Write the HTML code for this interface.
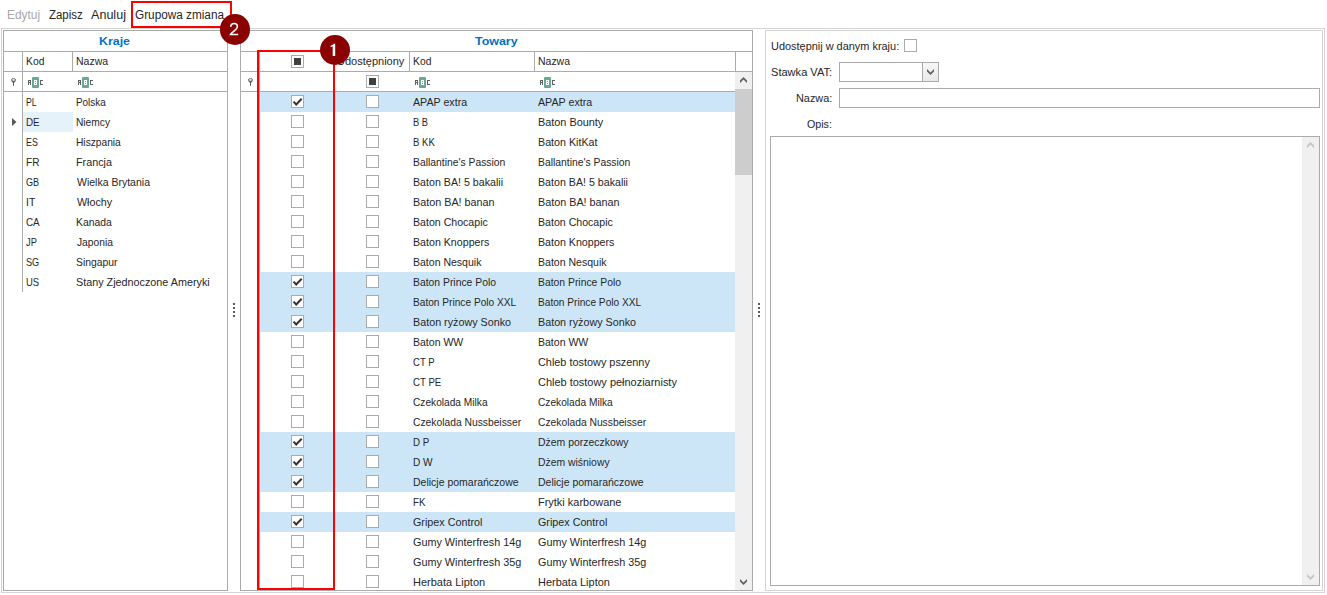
<!DOCTYPE html>
<html><head><meta charset="utf-8"><title>Towary</title>
<style>
html,body{margin:0;padding:0;background:#fff}
body{width:1327px;height:595px;position:relative;overflow:hidden;font-family:"Liberation Sans",sans-serif;font-size:11px;color:#262626}
.a{position:absolute}
.t{position:absolute;white-space:pre;line-height:20px;height:20px;transform-origin:0 0}
.b{position:absolute;box-sizing:border-box}
.cb{position:absolute;box-sizing:border-box;width:13px;height:13px;border:1px solid #ababab;background:#fff}
.ln{position:absolute;background:#ababab}
.hl{position:absolute;background:#cde6f7;height:20px}
svg{position:absolute;overflow:visible}
</style></head><body>
<div class="b" style="left:1px;top:28px;width:1324px;height:565px;border:1px solid #d4d4d4;background:transparent;"></div>
<div class="b" style="left:3px;top:30px;width:225px;height:561px;border:1px solid #ababab;background:#fff;"></div>
<div class="a" style="left:4px;top:51px;width:223px;height:1px;background:#ababab;"></div>
<div class="a" style="left:4px;top:71px;width:223px;height:1px;background:#ababab;"></div>
<div class="a" style="left:4px;top:91px;width:223px;height:1px;background:#ababab;"></div>
<div class="a" style="left:22px;top:52px;width:1px;height:240px;background:#ababab;"></div>
<div class="a" style="left:72px;top:52px;width:1px;height:19px;background:#ababab;"></div>
<div class="a" style="left:23px;top:112px;width:50px;height:20px;background:#e6f2fa;"></div>
<div class="b" style="left:240px;top:30px;width:513px;height:561px;border:1px solid #ababab;background:#fff;"></div>
<div class="hl" style="left:260px;top:92px;width:475px;height:20px"></div>
<div class="hl" style="left:260px;top:272px;width:475px;height:20px"></div>
<div class="hl" style="left:260px;top:292px;width:475px;height:20px"></div>
<div class="hl" style="left:260px;top:312px;width:475px;height:20px"></div>
<div class="hl" style="left:260px;top:432px;width:475px;height:20px"></div>
<div class="hl" style="left:260px;top:452px;width:475px;height:20px"></div>
<div class="hl" style="left:260px;top:472px;width:475px;height:20px"></div>
<div class="hl" style="left:260px;top:512px;width:475px;height:20px"></div>
<div class="a" style="left:241px;top:51px;width:511px;height:1px;background:#ababab;"></div>
<div class="a" style="left:241px;top:71px;width:511px;height:1px;background:#ababab;"></div>
<div class="a" style="left:241px;top:91px;width:494px;height:1px;background:#ababab;"></div>
<div class="a" style="left:259px;top:52px;width:1px;height:538px;background:#ababab;"></div>
<div class="a" style="left:334px;top:52px;width:1px;height:19px;background:#ababab;"></div>
<div class="a" style="left:409px;top:52px;width:1px;height:19px;background:#ababab;"></div>
<div class="a" style="left:534px;top:52px;width:1px;height:19px;background:#ababab;"></div>
<div class="a" style="left:735px;top:52px;width:1px;height:19px;background:#ababab;"></div>
<div class="a" style="left:735px;top:72px;width:17px;height:518px;background:#f0f0f0;"></div>
<div class="a" style="left:735px;top:89px;width:17px;height:86px;background:#cdcdcd;"></div>
<div class="b" style="left:765px;top:30px;width:558px;height:561px;border:1px solid #d4d4d4;background:#fff;"></div>
<div class="a" style="left:233px;top:303px;width:2px;height:2px;background:#5a5a5a;"></div>
<div class="a" style="left:233px;top:307px;width:2px;height:2px;background:#5a5a5a;"></div>
<div class="a" style="left:233px;top:311px;width:2px;height:2px;background:#5a5a5a;"></div>
<div class="a" style="left:233px;top:315px;width:2px;height:2px;background:#5a5a5a;"></div>
<div class="a" style="left:758px;top:303px;width:2px;height:2px;background:#5a5a5a;"></div>
<div class="a" style="left:758px;top:307px;width:2px;height:2px;background:#5a5a5a;"></div>
<div class="a" style="left:758px;top:311px;width:2px;height:2px;background:#5a5a5a;"></div>
<div class="a" style="left:758px;top:315px;width:2px;height:2px;background:#5a5a5a;"></div>
<svg style="left:10px;top:77.5px" width="7" height="9" viewBox="0 0 7 9"><path d="M1.2 2.8 L5.8 2.8 L4 4.9 L4 7.7 L3 7.7 L3 4.9 Z" fill="#5a5a5a"/><ellipse cx="3.5" cy="1.95" rx="2.1" ry="1.3" fill="#fff" stroke="#555" stroke-width="0.9"/></svg>
<svg style="left:247px;top:77.5px" width="7" height="9" viewBox="0 0 7 9"><path d="M1.2 2.8 L5.8 2.8 L4 4.9 L4 7.7 L3 7.7 L3 4.9 Z" fill="#5a5a5a"/><ellipse cx="3.5" cy="1.95" rx="2.1" ry="1.3" fill="#fff" stroke="#555" stroke-width="0.9"/></svg>
<svg style="left:28px;top:77px" width="15" height="11" viewBox="0 0 15 11" shape-rendering="crispEdges"><rect x="4" y="0" width="7" height="11" rx="1" fill="#6ba892" shape-rendering="auto"/><path d="M0 3h3v5h-1v-2h-1v2h-1z M1 4v1h1v-1z" fill="#5f5f5f" fill-rule="evenodd"/><rect x="6" y="3" width="3" height="5" fill="#fff"/><rect x="7" y="4" width="1" height="1" fill="#6ba892"/><rect x="7" y="6" width="1" height="1" fill="#6ba892"/><path d="M12 3h3v1h-2v3h2v1h-3z" fill="#5f5f5f"/></svg>
<svg style="left:78px;top:77px" width="15" height="11" viewBox="0 0 15 11" shape-rendering="crispEdges"><rect x="4" y="0" width="7" height="11" rx="1" fill="#6ba892" shape-rendering="auto"/><path d="M0 3h3v5h-1v-2h-1v2h-1z M1 4v1h1v-1z" fill="#5f5f5f" fill-rule="evenodd"/><rect x="6" y="3" width="3" height="5" fill="#fff"/><rect x="7" y="4" width="1" height="1" fill="#6ba892"/><rect x="7" y="6" width="1" height="1" fill="#6ba892"/><path d="M12 3h3v1h-2v3h2v1h-3z" fill="#5f5f5f"/></svg>
<svg style="left:415px;top:77px" width="15" height="11" viewBox="0 0 15 11" shape-rendering="crispEdges"><rect x="4" y="0" width="7" height="11" rx="1" fill="#6ba892" shape-rendering="auto"/><path d="M0 3h3v5h-1v-2h-1v2h-1z M1 4v1h1v-1z" fill="#5f5f5f" fill-rule="evenodd"/><rect x="6" y="3" width="3" height="5" fill="#fff"/><rect x="7" y="4" width="1" height="1" fill="#6ba892"/><rect x="7" y="6" width="1" height="1" fill="#6ba892"/><path d="M12 3h3v1h-2v3h2v1h-3z" fill="#5f5f5f"/></svg>
<svg style="left:540px;top:77px" width="15" height="11" viewBox="0 0 15 11" shape-rendering="crispEdges"><rect x="4" y="0" width="7" height="11" rx="1" fill="#6ba892" shape-rendering="auto"/><path d="M0 3h3v5h-1v-2h-1v2h-1z M1 4v1h1v-1z" fill="#5f5f5f" fill-rule="evenodd"/><rect x="6" y="3" width="3" height="5" fill="#fff"/><rect x="7" y="4" width="1" height="1" fill="#6ba892"/><rect x="7" y="6" width="1" height="1" fill="#6ba892"/><path d="M12 3h3v1h-2v3h2v1h-3z" fill="#5f5f5f"/></svg>
<svg style="left:12px;top:118px" width="5" height="8" viewBox="0 0 5 8"><path d="M0 0 L4.5 4 L0 8 Z" fill="#5a5a5a"/></svg>
<div class="cb" style="left:291px;top:55px"><div class="a" style="left:2px;top:2px;width:7px;height:7px;background:#404040"></div></div>
<div class="cb" style="left:366px;top:75px"><div class="a" style="left:2px;top:2px;width:7px;height:7px;background:#404040"></div></div>
<div class="cb" style="left:291px;top:95px"><svg style="left:0;top:0" width="11" height="11" viewBox="0 0 11 11"><path d="M1.5 5.6 L4.2 8.5 L9.7 2.7" fill="none" stroke="#333" stroke-width="2"/></svg></div>
<div class="cb" style="left:366px;top:95px"></div>
<div class="cb" style="left:291px;top:115px"></div>
<div class="cb" style="left:366px;top:115px"></div>
<div class="cb" style="left:291px;top:135px"></div>
<div class="cb" style="left:366px;top:135px"></div>
<div class="cb" style="left:291px;top:155px"></div>
<div class="cb" style="left:366px;top:155px"></div>
<div class="cb" style="left:291px;top:175px"></div>
<div class="cb" style="left:366px;top:175px"></div>
<div class="cb" style="left:291px;top:195px"></div>
<div class="cb" style="left:366px;top:195px"></div>
<div class="cb" style="left:291px;top:215px"></div>
<div class="cb" style="left:366px;top:215px"></div>
<div class="cb" style="left:291px;top:235px"></div>
<div class="cb" style="left:366px;top:235px"></div>
<div class="cb" style="left:291px;top:255px"></div>
<div class="cb" style="left:366px;top:255px"></div>
<div class="cb" style="left:291px;top:275px"><svg style="left:0;top:0" width="11" height="11" viewBox="0 0 11 11"><path d="M1.5 5.6 L4.2 8.5 L9.7 2.7" fill="none" stroke="#333" stroke-width="2"/></svg></div>
<div class="cb" style="left:366px;top:275px"></div>
<div class="cb" style="left:291px;top:295px"><svg style="left:0;top:0" width="11" height="11" viewBox="0 0 11 11"><path d="M1.5 5.6 L4.2 8.5 L9.7 2.7" fill="none" stroke="#333" stroke-width="2"/></svg></div>
<div class="cb" style="left:366px;top:295px"></div>
<div class="cb" style="left:291px;top:315px"><svg style="left:0;top:0" width="11" height="11" viewBox="0 0 11 11"><path d="M1.5 5.6 L4.2 8.5 L9.7 2.7" fill="none" stroke="#333" stroke-width="2"/></svg></div>
<div class="cb" style="left:366px;top:315px"></div>
<div class="cb" style="left:291px;top:335px"></div>
<div class="cb" style="left:366px;top:335px"></div>
<div class="cb" style="left:291px;top:355px"></div>
<div class="cb" style="left:366px;top:355px"></div>
<div class="cb" style="left:291px;top:375px"></div>
<div class="cb" style="left:366px;top:375px"></div>
<div class="cb" style="left:291px;top:395px"></div>
<div class="cb" style="left:366px;top:395px"></div>
<div class="cb" style="left:291px;top:415px"></div>
<div class="cb" style="left:366px;top:415px"></div>
<div class="cb" style="left:291px;top:435px"><svg style="left:0;top:0" width="11" height="11" viewBox="0 0 11 11"><path d="M1.5 5.6 L4.2 8.5 L9.7 2.7" fill="none" stroke="#333" stroke-width="2"/></svg></div>
<div class="cb" style="left:366px;top:435px"></div>
<div class="cb" style="left:291px;top:455px"><svg style="left:0;top:0" width="11" height="11" viewBox="0 0 11 11"><path d="M1.5 5.6 L4.2 8.5 L9.7 2.7" fill="none" stroke="#333" stroke-width="2"/></svg></div>
<div class="cb" style="left:366px;top:455px"></div>
<div class="cb" style="left:291px;top:475px"><svg style="left:0;top:0" width="11" height="11" viewBox="0 0 11 11"><path d="M1.5 5.6 L4.2 8.5 L9.7 2.7" fill="none" stroke="#333" stroke-width="2"/></svg></div>
<div class="cb" style="left:366px;top:475px"></div>
<div class="cb" style="left:291px;top:495px"></div>
<div class="cb" style="left:366px;top:495px"></div>
<div class="cb" style="left:291px;top:515px"><svg style="left:0;top:0" width="11" height="11" viewBox="0 0 11 11"><path d="M1.5 5.6 L4.2 8.5 L9.7 2.7" fill="none" stroke="#333" stroke-width="2"/></svg></div>
<div class="cb" style="left:366px;top:515px"></div>
<div class="cb" style="left:291px;top:535px"></div>
<div class="cb" style="left:366px;top:535px"></div>
<div class="cb" style="left:291px;top:555px"></div>
<div class="cb" style="left:366px;top:555px"></div>
<div class="cb" style="left:291px;top:575px"></div>
<div class="cb" style="left:366px;top:575px"></div>
<div class="cb" style="left:904px;top:39px"></div>
<svg style="left:740px;top:77px" width="7" height="6" viewBox="0 0 7 6"><path d="M0 3.5 L3.5 0 L7 3.5 L7 6 L3.5 2.5 L0 6 Z" fill="#606060"/></svg>
<svg style="left:740px;top:579px" width="7" height="6" viewBox="0 0 7 6"><path d="M0 0 L3.5 3.5 L7 0 L7 2.5 L3.5 6 L0 2.5 Z" fill="#606060"/></svg>
<div class="b" style="left:839px;top:62px;width:100px;height:20px;border:1px solid #ababab;background:#fff;"></div>
<div class="a" style="left:923px;top:63px;width:15px;height:18px;background:#f0f0f0;background:linear-gradient(#f6f6f6,#e9e9e9);"></div>
<div class="a" style="left:922px;top:63px;width:1px;height:18px;background:#ababab;"></div>
<svg style="left:927px;top:69px" width="7" height="6" viewBox="0 0 7 6"><path d="M0 0 L3.5 3.5 L7 0 L7 2.5 L3.5 6 L0 2.5 Z" fill="#606060"/></svg>
<div class="b" style="left:839px;top:88px;width:481px;height:20px;border:1px solid #ababab;background:#fff;"></div>
<div class="b" style="left:770px;top:136px;width:550px;height:450px;border:1px solid #ababab;background:#fff;"></div>
<div class="a" style="left:1302px;top:137px;width:17px;height:448px;background:#f0f0f0;"></div>
<svg style="left:1307px;top:142px" width="7" height="6" viewBox="0 0 7 6"><path d="M0 3.5 L3.5 0 L7 3.5 L7 6 L3.5 2.5 L0 6 Z" fill="#c3c3c3"/></svg>
<svg style="left:1307px;top:574px" width="7" height="6" viewBox="0 0 7 6"><path d="M0 0 L3.5 3.5 L7 0 L7 2.5 L3.5 6 L0 2.5 Z" fill="#c3c3c3"/></svg>
<div class="t" id="tb0" style="left:7.00px;top:5px;font-size:12px;color:#a8a8a8;transform:scaleX(0.9943);">Edytuj</div>
<div class="t" id="tb1" style="left:49.00px;top:5px;font-size:12px;transform:scaleX(0.9536);">Zapisz</div>
<div class="t" id="tb2" style="left:91.00px;top:5px;font-size:12px;transform:scaleX(1.0479);">Anuluj</div>
<div class="t" id="tb3" style="left:135.00px;top:5px;font-size:12px;transform:scaleX(0.9813);">Grupowa zmiana</div>
<div class="t" id="bK" style="left:99.00px;top:31px;font-size:11px;font-weight:bold;color:#0072c6;transform:scaleX(1.1263);">Kraje</div>
<div class="t" id="bT" style="left:475.00px;top:31px;font-size:11px;font-weight:bold;color:#0072c6;transform:scaleX(1.1294);">Towary</div>
<div class="t" id="hK1" style="left:26.00px;top:51px;font-size:11px;transform:scaleX(0.9395);">Kod</div>
<div class="t" id="hK2" style="left:76.00px;top:51px;font-size:11px;transform:scaleX(0.9539);">Nazwa</div>
<div class="t" id="hT0" style="left:337.00px;top:51px;font-size:11px;transform:scaleX(1.0010);">Udostępniony</div>
<div class="t" id="hT1" style="left:413.00px;top:51px;font-size:11px;transform:scaleX(0.9395);">Kod</div>
<div class="t" id="hT2" style="left:538.00px;top:51px;font-size:11px;transform:scaleX(0.9521);">Nazwa</div>
<div class="t" id="ck0" style="left:26.00px;top:92px;font-size:11px;transform:scaleX(0.7920);">PL</div>
<div class="t" id="cn0" style="left:76.00px;top:92px;font-size:11px;transform:scaleX(0.9004);">Polska</div>
<div class="t" id="ck1" style="left:26.00px;top:112px;font-size:11px;transform:scaleX(0.8952);">DE</div>
<div class="t" id="cn1" style="left:76.00px;top:112px;font-size:11px;transform:scaleX(0.9265);">Niemcy</div>
<div class="t" id="ck2" style="left:26.00px;top:132px;font-size:11px;transform:scaleX(0.8043);">ES</div>
<div class="t" id="cn2" style="left:76.00px;top:132px;font-size:11px;transform:scaleX(0.9274);">Hiszpania</div>
<div class="t" id="ck3" style="left:26.00px;top:152px;font-size:11px;transform:scaleX(0.9165);">FR</div>
<div class="t" id="cn3" style="left:76.00px;top:152px;font-size:11px;transform:scaleX(0.9790);">Francja</div>
<div class="t" id="ck4" style="left:26.00px;top:172px;font-size:11px;transform:scaleX(0.8254);">GB</div>
<div class="t" id="cn4" style="left:77.00px;top:172px;font-size:11px;transform:scaleX(0.9550);">Wielka Brytania</div>
<div class="t" id="ck5" style="left:26.00px;top:192px;font-size:11px;transform:scaleX(0.9502);">IT</div>
<div class="t" id="cn5" style="left:77.00px;top:192px;font-size:11px;transform:scaleX(0.9750);">Włochy</div>
<div class="t" id="ck6" style="left:26.00px;top:212px;font-size:11px;transform:scaleX(0.8966);">CA</div>
<div class="t" id="cn6" style="left:76.00px;top:212px;font-size:11px;transform:scaleX(0.9444);">Kanada</div>
<div class="t" id="ck7" style="left:26.00px;top:232px;font-size:11px;transform:scaleX(0.8417);">JP</div>
<div class="t" id="cn7" style="left:77.00px;top:232px;font-size:11px;transform:scaleX(0.9318);">Japonia</div>
<div class="t" id="ck8" style="left:26.00px;top:252px;font-size:11px;transform:scaleX(0.8338);">SG</div>
<div class="t" id="cn8" style="left:76.00px;top:252px;font-size:11px;transform:scaleX(0.9440);">Singapur</div>
<div class="t" id="ck9" style="left:26.00px;top:272px;font-size:11px;transform:scaleX(0.8601);">US</div>
<div class="t" id="cn9" style="left:76.00px;top:272px;font-size:11px;transform:scaleX(0.9809);">Stany Zjednoczone Ameryki</div>
<div class="t" id="gk0" style="left:413.00px;top:92px;font-size:11px;transform:scaleX(0.9698);">APAP extra</div>
<div class="t" id="gn0" style="left:538.00px;top:92px;font-size:11px;transform:scaleX(0.9709);">APAP extra</div>
<div class="t" id="gk1" style="left:413.00px;top:112px;font-size:11px;transform:scaleX(0.8516);">B B</div>
<div class="t" id="gn1" style="left:538.00px;top:112px;font-size:11px;transform:scaleX(0.9887);">Baton Bounty</div>
<div class="t" id="gk2" style="left:413.00px;top:132px;font-size:11px;transform:scaleX(0.8691);">B KK</div>
<div class="t" id="gn2" style="left:538.00px;top:132px;font-size:11px;transform:scaleX(0.9725);">Baton KitKat</div>
<div class="t" id="gk3" style="left:413.00px;top:152px;font-size:11px;transform:scaleX(0.9409);">Ballantine&#x27;s Passion</div>
<div class="t" id="gn3" style="left:538.00px;top:152px;font-size:11px;transform:scaleX(0.9413);">Ballantine&#x27;s Passion</div>
<div class="t" id="gk4" style="left:413.00px;top:172px;font-size:11px;transform:scaleX(0.9686);">Baton BA! 5 bakalii</div>
<div class="t" id="gn4" style="left:538.00px;top:172px;font-size:11px;transform:scaleX(0.9680);">Baton BA! 5 bakalii</div>
<div class="t" id="gk5" style="left:413.00px;top:192px;font-size:11px;transform:scaleX(0.9806);">Baton BA! banan</div>
<div class="t" id="gn5" style="left:538.00px;top:192px;font-size:11px;transform:scaleX(0.9807);">Baton BA! banan</div>
<div class="t" id="gk6" style="left:413.00px;top:212px;font-size:11px;transform:scaleX(0.9633);">Baton Chocapic</div>
<div class="t" id="gn6" style="left:538.00px;top:212px;font-size:11px;transform:scaleX(0.9632);">Baton Chocapic</div>
<div class="t" id="gk7" style="left:413.00px;top:232px;font-size:11px;transform:scaleX(0.9676);">Baton Knoppers</div>
<div class="t" id="gn7" style="left:538.00px;top:232px;font-size:11px;transform:scaleX(0.9686);">Baton Knoppers</div>
<div class="t" id="gk8" style="left:413.00px;top:252px;font-size:11px;transform:scaleX(0.9563);">Baton Nesquik</div>
<div class="t" id="gn8" style="left:538.00px;top:252px;font-size:11px;transform:scaleX(0.9576);">Baton Nesquik</div>
<div class="t" id="gk9" style="left:413.00px;top:272px;font-size:11px;transform:scaleX(0.9430);">Baton Prince Polo</div>
<div class="t" id="gn9" style="left:538.00px;top:272px;font-size:11px;transform:scaleX(0.9422);">Baton Prince Polo</div>
<div class="t" id="gk10" style="left:413.00px;top:292px;font-size:11px;transform:scaleX(0.9219);">Baton Prince Polo XXL</div>
<div class="t" id="gn10" style="left:538.00px;top:292px;font-size:11px;transform:scaleX(0.9217);">Baton Prince Polo XXL</div>
<div class="t" id="gk11" style="left:413.00px;top:312px;font-size:11px;transform:scaleX(0.9779);">Baton ryżowy Sonko</div>
<div class="t" id="gn11" style="left:538.00px;top:312px;font-size:11px;transform:scaleX(0.9776);">Baton ryżowy Sonko</div>
<div class="t" id="gk12" style="left:413.00px;top:332px;font-size:11px;transform:scaleX(0.9563);">Baton WW</div>
<div class="t" id="gn12" style="left:538.00px;top:332px;font-size:11px;transform:scaleX(0.9568);">Baton WW</div>
<div class="t" id="gk13" style="left:413.00px;top:352px;font-size:11px;transform:scaleX(0.8685);">CT P</div>
<div class="t" id="gn13" style="left:538.00px;top:352px;font-size:11px;transform:scaleX(0.9888);">Chleb tostowy pszenny</div>
<div class="t" id="gk14" style="left:413.00px;top:372px;font-size:11px;transform:scaleX(0.8776);">CT PE</div>
<div class="t" id="gn14" style="left:538.00px;top:372px;font-size:11px;transform:scaleX(0.9963);">Chleb tostowy pełnoziarnisty</div>
<div class="t" id="gk15" style="left:413.00px;top:392px;font-size:11px;transform:scaleX(0.9237);">Czekolada Milka</div>
<div class="t" id="gn15" style="left:538.00px;top:392px;font-size:11px;transform:scaleX(0.9254);">Czekolada Milka</div>
<div class="t" id="gk16" style="left:413.00px;top:412px;font-size:11px;transform:scaleX(0.9354);">Czekolada Nussbeisser</div>
<div class="t" id="gn16" style="left:538.00px;top:412px;font-size:11px;transform:scaleX(0.9353);">Czekolada Nussbeisser</div>
<div class="t" id="gk17" style="left:413.00px;top:432px;font-size:11px;transform:scaleX(0.8850);">D P</div>
<div class="t" id="gn17" style="left:538.00px;top:432px;font-size:11px;transform:scaleX(0.9495);">Dżem porzeczkowy</div>
<div class="t" id="gk18" style="left:413.00px;top:452px;font-size:11px;transform:scaleX(0.9187);">D W</div>
<div class="t" id="gn18" style="left:538.00px;top:452px;font-size:11px;transform:scaleX(0.9444);">Dżem wiśniowy</div>
<div class="t" id="gk19" style="left:413.00px;top:472px;font-size:11px;transform:scaleX(0.9545);">Delicje pomarańczowe</div>
<div class="t" id="gn19" style="left:538.00px;top:472px;font-size:11px;transform:scaleX(0.9543);">Delicje pomarańczowe</div>
<div class="t" id="gk20" style="left:413.00px;top:492px;font-size:11px;transform:scaleX(0.8834);">FK</div>
<div class="t" id="gn20" style="left:538.00px;top:492px;font-size:11px;transform:scaleX(0.9960);">Frytki karbowane</div>
<div class="t" id="gk21" style="left:413.00px;top:512px;font-size:11px;transform:scaleX(0.9784);">Gripex Control</div>
<div class="t" id="gn21" style="left:538.00px;top:512px;font-size:11px;transform:scaleX(0.9769);">Gripex Control</div>
<div class="t" id="gk22" style="left:413.00px;top:532px;font-size:11px;transform:scaleX(0.9840);">Gumy Winterfresh 14g</div>
<div class="t" id="gn22" style="left:538.00px;top:532px;font-size:11px;transform:scaleX(0.9838);">Gumy Winterfresh 14g</div>
<div class="t" id="gk23" style="left:413.00px;top:552px;font-size:11px;transform:scaleX(0.9840);">Gumy Winterfresh 35g</div>
<div class="t" id="gn23" style="left:538.00px;top:552px;font-size:11px;transform:scaleX(0.9838);">Gumy Winterfresh 35g</div>
<div class="t" id="gk24" style="left:413.00px;top:572px;font-size:11px;">Herbata Lipton</div>
<div class="t" id="gn24" style="left:538.00px;top:572px;font-size:11px;transform:scaleX(0.9962);">Herbata Lipton</div>
<div class="t" id="l0" style="left:771.00px;top:36px;font-size:11px;transform:scaleX(0.9935);">Udostępnij w danym kraju:</div>
<div class="t" id="l1" style="left:771.00px;top:62px;font-size:11px;transform:scaleX(1.0061);">Stawka VAT:</div>
<div class="t" id="l2" style="left:796.00px;top:88px;font-size:11px;transform:scaleX(0.9878);">Nazwa:</div>
<div class="t" id="l3" style="left:807.00px;top:114px;font-size:11px;transform:scaleX(0.9698);">Opis:</div>
<div class="b" style="left:131px;top:1px;width:101px;height:27px;border:1px solid #ff0000;background:transparent;border-width:2px;"></div>
<div class="b" style="left:257px;top:50px;width:78px;height:540px;border:1px solid #ff0000;background:transparent;border-width:2px;"></div>
<div class="a" style="left:219.5px;top:14.4px;width:30.2px;height:30.2px;border-radius:50%;background:#8b0000"></div>
<svg style="left:0;top:0" width="1327" height="595" viewBox="0 0 1327 595"><path d="M230.7 26.9 C230.8 24.6 232.2 23.5 234.1 23.5 C236.1 23.5 237.4 24.7 237.4 26.4 C237.4 28.1 236.2 29.3 234.3 30.9 C232.5 32.4 231 33.5 230.5 34.5 L238.2 34.5" fill="none" stroke="#fff" stroke-width="1.55"/></svg>
<div class="a" style="left:319.5px;top:35.3px;width:30.0px;height:30.0px;border-radius:50%;background:#8b0000"></div>
<svg style="left:0;top:0" width="1327" height="595" viewBox="0 0 1327 595"><path d="M335.2 43.8 L333.7 43.8 Q332.6 45.4 330.6 45.8 L330.6 47.3 Q331.8 47 332.7 46.3 L332.7 56.1 L335.2 56.1 Z" fill="#fff"/></svg>
</body></html>
